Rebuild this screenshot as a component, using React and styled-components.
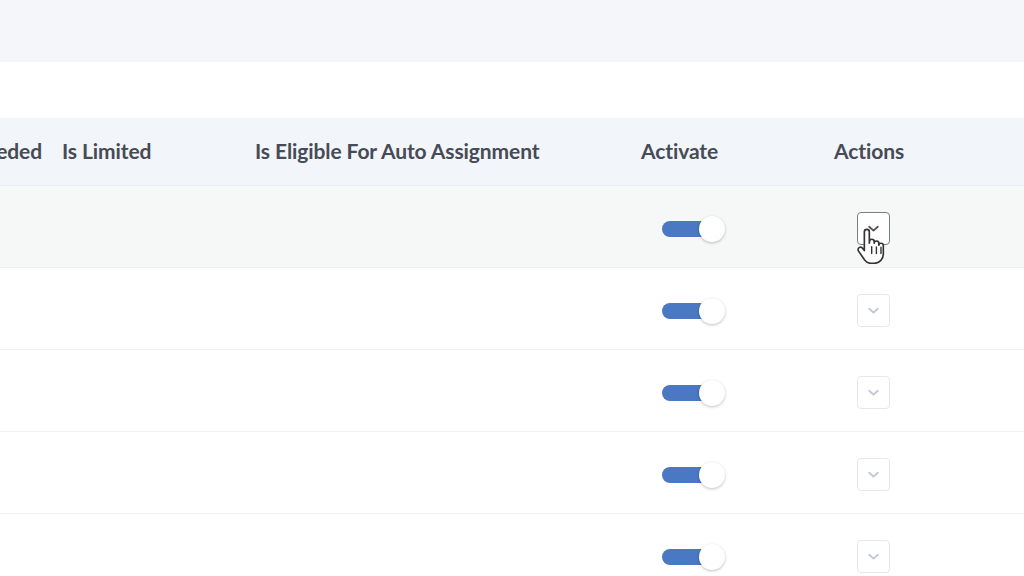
import styled, { createGlobalStyle } from 'styled-components';

const GlobalStyle = createGlobalStyle`
  html, body {
    margin: 0;
    padding: 0;
    background: #ffffff;
    font-family: Lato, "Open Sans", sans-serif;
  }
`;

const columns = [
  { key: 'needed', label: 'Reason Needed' },
  { key: 'limited', label: 'Is Limited' },
  { key: 'eligible', label: 'Is Eligible For Auto Assignment' },
  { key: 'activate', label: 'Activate' },
  { key: 'actions', label: 'Actions' },
];

const rows = [
  { id: 1, active: true, hovered: true },
  { id: 2, active: true },
  { id: 3, active: true },
  { id: 4, active: true },
  { id: 5, active: true },
];

export default function App() {
  return (
    <Page>
      <GlobalStyle />
      <TopBand />
      <Toolbar />
      <Viewport>
        <Table>
          <HeaderRow>
            {columns.map((c) => (
              <HeaderCell key={c.key}>{c.label}</HeaderCell>
            ))}
          </HeaderRow>
          {rows.map((r) => (
            <Row key={r.id} $hovered={r.hovered}>
              <Cell />
              <Cell />
              <Cell />
              <Cell $pad={21}>
                <Toggle $on={r.active}>
                  <Knob />
                </Toggle>
              </Cell>
              <Cell $pad={23}>
                <ActionButton $hovered={r.hovered}>
                  <svg width="17" height="17" viewBox="0 0 24 24" fill="none" stroke="currentColor" strokeWidth="2.6" strokeLinecap="round" strokeLinejoin="round">
                    <path d="M6 9.5l6 5.5 6-5.5" />
                  </svg>
                  {r.hovered && (
                    <Cursor viewBox="2 1.5 20 26" width="28" height="36">
                      <path
                        d="M9 2.5c1 0 1.8.8 1.8 1.8v8.2l.1-1.2c0-1 .8-1.7 1.7-1.7s1.7.8 1.7 1.7v1.2c0-1 .8-1.6 1.7-1.6s1.7.8 1.7 1.7v1.4c0-.9.8-1.5 1.6-1.5.9 0 1.6.7 1.6 1.6v6.2c0 3.9-2.9 6.7-6.6 6.7h-2.2c-2.2 0-3.6-1-4.8-2.6L3 18.2c-.6-.9-.4-2 .4-2.5.8-.6 1.9-.4 2.5.4l1.3 1.7V4.3c0-1 .8-1.8 1.8-1.8z"
                        fill="#ffffff"
                        stroke="#333"
                        strokeWidth="1.2"
                        strokeLinejoin="round"
                      />
                      <path d="M12.5 15v5M15.9 15.2v4.8M19.2 15.4v4.6" stroke="#333" strokeWidth="1" strokeLinecap="round" />
                    </Cursor>
                  )}
                </ActionButton>
              </Cell>
            </Row>
          ))}
        </Table>
      </Viewport>
    </Page>
  );
}

const Page = styled.div`
  width: 1024px;
  height: 576px;
  overflow: hidden;
  background: #ffffff;
`;

const TopBand = styled.div`
  height: 62px;
  background: #f4f6f9;
`;

const Toolbar = styled.div`
  height: 56px;
  background: #ffffff;
`;

// table is scrolled sideways, first column only partly visible
const Viewport = styled.div`
  overflow: hidden;
`;

const Table = styled.div`
  margin-left: -188px;
  width: 1400px;
`;

const grid = `
  display: grid;
  grid-template-columns: 250px 193px 386px 193px 378px;
`;

const HeaderRow = styled.div`
  ${grid}
  height: 65px;
  padding-bottom: 2px;
  align-items: center;
  background: #f2f5f9;
  border-bottom: 1px solid #eceef1;
`;

const HeaderCell = styled.div`
  font-size: 21px;
  font-weight: 700;
  color: #464b55;
  letter-spacing: -0.1px;
  white-space: nowrap;
  &:first-child {
    text-align: right;
    padding-right: 20px;
  }
`;

const Row = styled.div`
  ${grid}
  height: 77px;
  padding-top: 4px;
  align-items: center;
  background: ${(p) => (p.$hovered ? '#f6f8f8' : '#ffffff')};
  border-bottom: 1px solid #f0f1f2;
`;

const Cell = styled.div`
  display: flex;
  align-items: center;
  padding-left: ${(p) => p.$pad || 0}px;
`;

const Toggle = styled.div`
  position: relative;
  width: 50px;
  height: 16px;
  border-radius: 8px;
  background: ${(p) => (p.$on ? '#4a78c3' : '#c9ced6')};
`;

const Knob = styled.div`
  position: absolute;
  top: 50%;
  right: -13px;
  width: 26px;
  height: 26px;
  margin-top: -13px;
  border-radius: 50%;
  background: #ffffff;
  box-shadow: 0 1px 3px rgba(0, 0, 0, 0.25);
`;

const ActionButton = styled.div`
  position: relative;
  width: 33px;
  height: 33px;
  box-sizing: border-box;
  border: 1px solid ${(p) => (p.$hovered ? '#7a7d82' : '#e6e8eb')};
  border-radius: 4px;
  background: #ffffff;
  display: flex;
  align-items: center;
  justify-content: center;
  color: ${(p) => (p.$hovered ? '#555' : '#c3c6d4')};
`;

const Cursor = styled.svg`
  position: absolute;
  left: -1px;
  top: 15px;
`;
